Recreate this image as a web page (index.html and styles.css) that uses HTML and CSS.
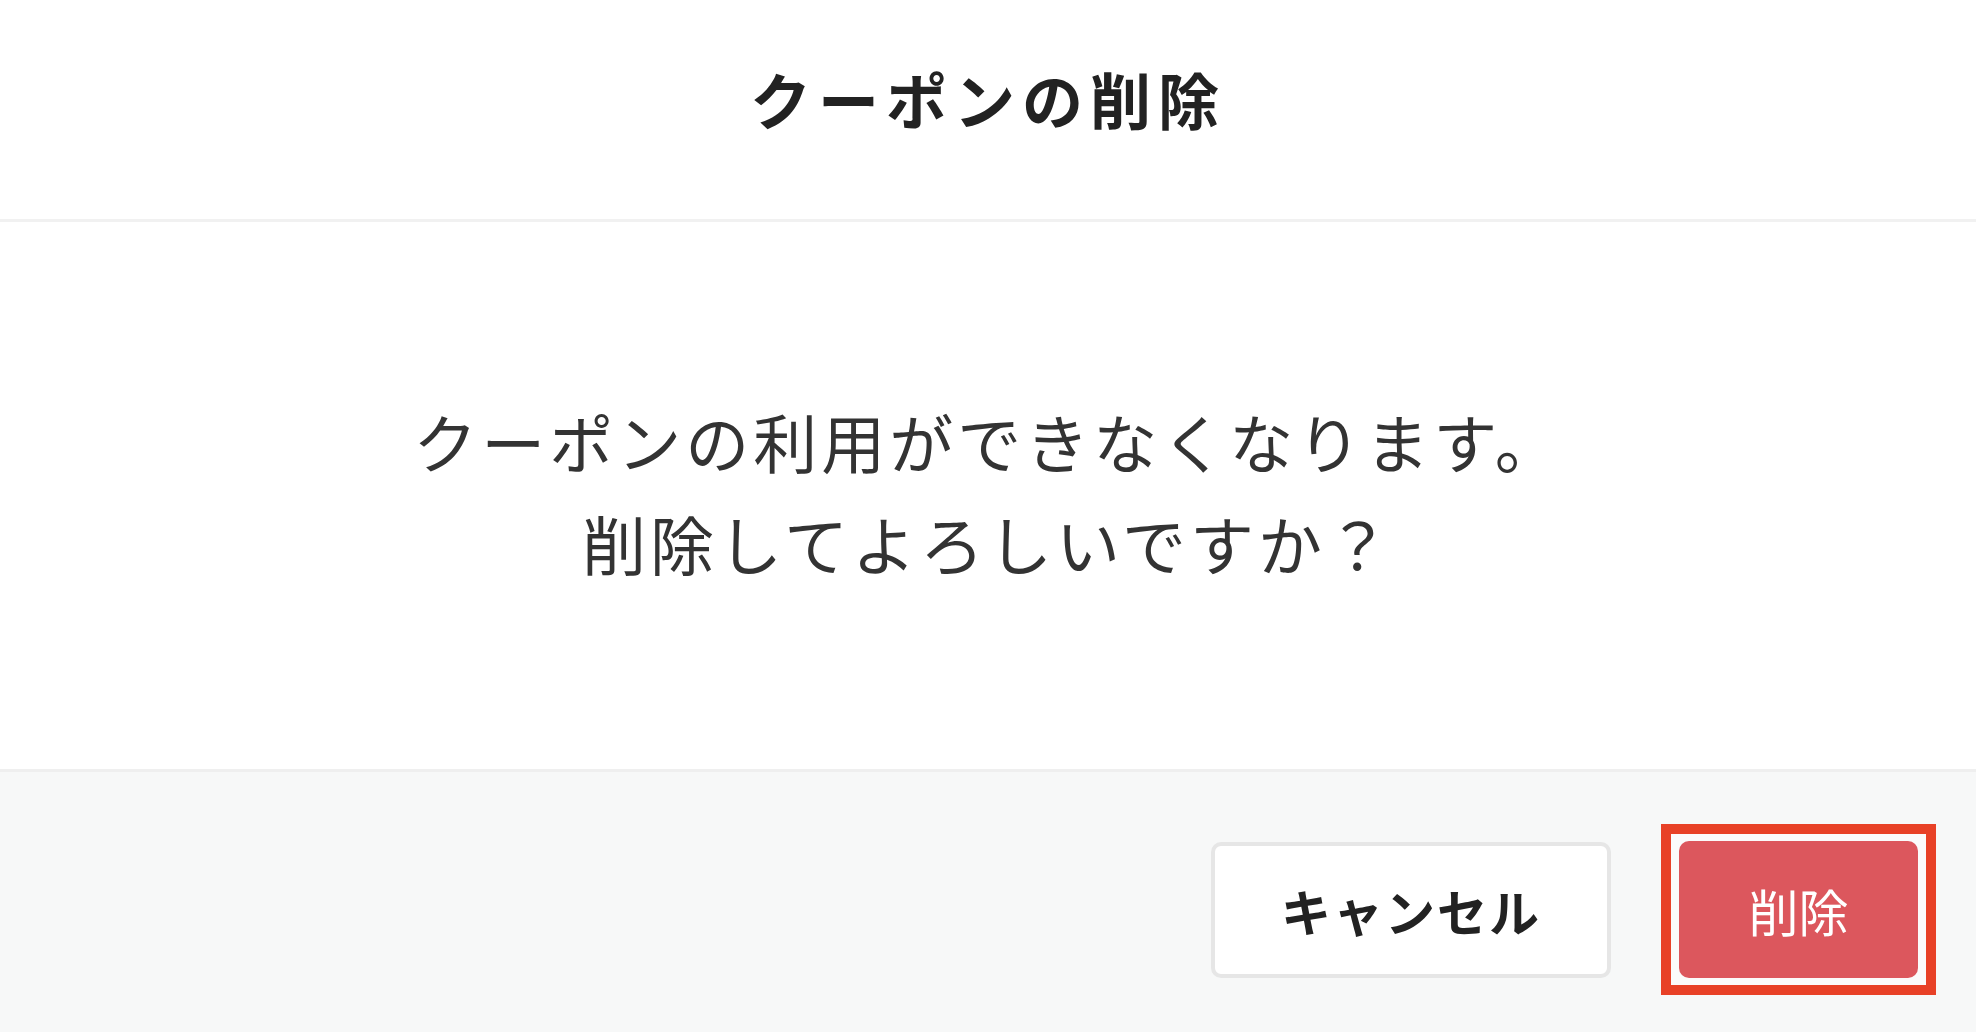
FILE: index.html
```html
<!DOCTYPE html>
<html lang="ja">
<head>
  <meta charset="UTF-8" />
  <meta name="viewport" content="width=device-width, initial-scale=1.0"/>
  <title>クーポンの削除</title>
  <link rel="stylesheet" href="styles.css">
</head>
<body>
  <div class="modal">
    <header class="modal-header">
      <h1>クーポンの削除</h1>
    </header>

    <div class="modal-body">
      <p>クーポンの利用ができなくなります。<br>削除してよろしいですか？</p>
    </div>

    <footer class="modal-footer">
      <button class="btn btn-cancel">キャンセル</button>
      <!-- highlighted action -->
      <span class="highlight">
        <button class="btn btn-delete">削除</button>
      </span>
    </footer>
  </div>
</body>
</html>
```

FILE: styles.css
```css
    * {
      box-sizing: border-box;
    }

    body {
      font-family: "Noto Sans CJK JP", "Noto Sans", sans-serif;
      margin: 0;
      background-color: #fff;
      color: #222;
    }

    .modal {
      display: flex;
      flex-direction: column;
      min-height: 100vh;
    }

    .modal-header {
      height: 222px;
      display: flex;
      align-items: center;
      justify-content: center;
      padding-bottom: 22px;
      border-bottom: 3px solid #f1f1f1;
    }

    .modal-header h1 {
      margin: 0;
      font-size: 61px;
      font-weight: bold;
      letter-spacing: 7px;
      color: #222;
    }

    .modal-body {
      height: 547px;
      display: flex;
      align-items: center;
      justify-content: center;
      padding-bottom: 10px;
    }

    .modal-body p {
      margin: 0;
      text-align: center;
      font-size: 64px;
      line-height: 102px;
      letter-spacing: 4px;
      color: #333;
    }

    .modal-footer {
      flex: 1;
      display: flex;
      justify-content: flex-end;
      align-items: flex-start;
      gap: 50px;
      padding: 52px 40px 30px;
      background-color: #f7f8f8;
      border-top: 3px solid #efefef;
    }

    .btn {
      font-family: inherit;
      font-size: 50px;
      font-weight: bold;
      border-radius: 10px;
      cursor: pointer;
    }

    .btn-cancel {
      width: 400px;
      height: 136px;
      margin-top: 18px;
      background: #fff;
      color: #222;
      border: 4px solid #e6e6e6;
      letter-spacing: 2px;
    }

    .highlight {
      display: flex;
      padding: 7px 8px;
      background: #fbfbfb;
      border: 10px solid #e84127;
    }

    .btn-delete {
      width: 239px;
      height: 137px;
      background: #dc575d;
      color: #fff;
      border: none;
      font-weight: normal;
    }
```
